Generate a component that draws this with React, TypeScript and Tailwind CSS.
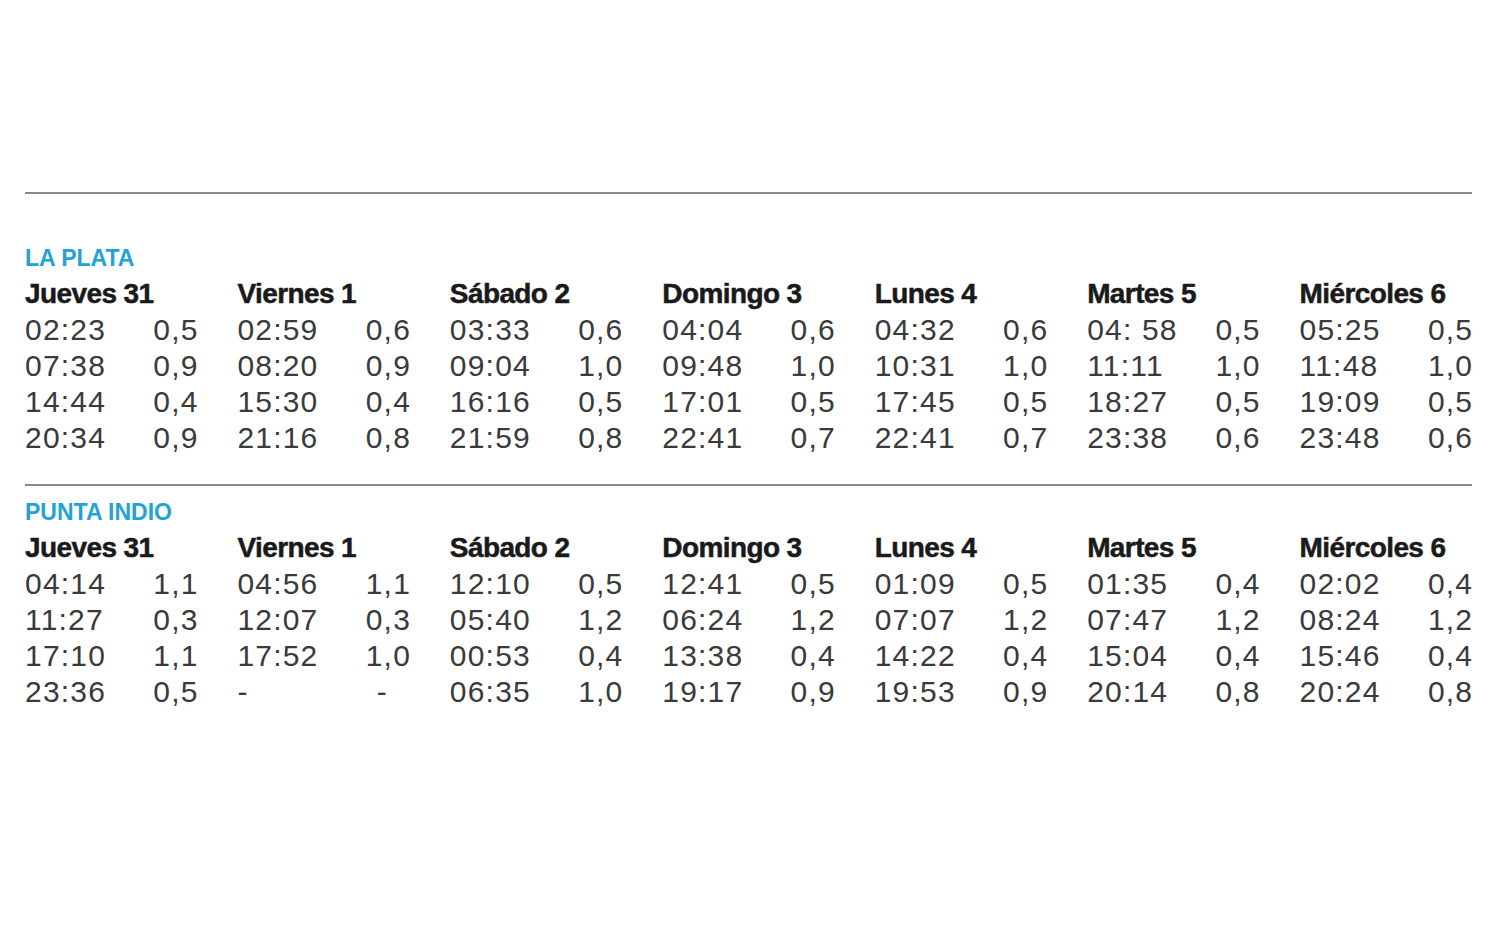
const days = ['Jueves 31', 'Viernes 1', 'Sábado 2', 'Domingo 3', 'Lunes 4', 'Martes 5', 'Miércoles 6'];

type Entry = [string, string];

const laPlata: Entry[][] = [
    [['02:23', '0,5'], ['07:38', '0,9'], ['14:44', '0,4'], ['20:34', '0,9']],
    [['02:59', '0,6'], ['08:20', '0,9'], ['15:30', '0,4'], ['21:16', '0,8']],
    [['03:33', '0,6'], ['09:04', '1,0'], ['16:16', '0,5'], ['21:59', '0,8']],
    [['04:04', '0,6'], ['09:48', '1,0'], ['17:01', '0,5'], ['22:41', '0,7']],
    [['04:32', '0,6'], ['10:31', '1,0'], ['17:45', '0,5'], ['22:41', '0,7']],
    [['04: 58', '0,5'], ['11:11', '1,0'], ['18:27', '0,5'], ['23:38', '0,6']],
    [['05:25', '0,5'], ['11:48', '1,0'], ['19:09', '0,5'], ['23:48', '0,6']],
];

const puntaIndio: Entry[][] = [
    [['04:14', '1,1'], ['11:27', '0,3'], ['17:10', '1,1'], ['23:36', '0,5']],
    [['04:56', '1,1'], ['12:07', '0,3'], ['17:52', '1,0'], ['-', '-']],
    [['12:10', '0,5'], ['05:40', '1,2'], ['00:53', '0,4'], ['06:35', '1,0']],
    [['12:41', '0,5'], ['06:24', '1,2'], ['13:38', '0,4'], ['19:17', '0,9']],
    [['01:09', '0,5'], ['07:07', '1,2'], ['14:22', '0,4'], ['19:53', '0,9']],
    [['01:35', '0,4'], ['07:47', '1,2'], ['15:04', '0,4'], ['20:14', '0,8']],
    [['02:02', '0,4'], ['08:24', '1,2'], ['15:46', '0,4'], ['20:24', '0,8']],
];

const Section = ({ title, data, className }: { title: string; data: Entry[][]; className?: string }) => (
    <div className={className}>
        <div className="h-[36px] leading-[36px] text-[23px] font-bold text-[#22a3d5]">{title}</div>
        <div className="grid grid-cols-7 gap-x-[40px]">
            {days.map((day, i) => (
                <div key={day} className="flex flex-col">
                    <div className="h-[36px] leading-[36px] text-[28px] font-bold text-[#1a1a1a] tracking-[-0.6px] whitespace-nowrap [-webkit-text-stroke:0.5px_#1a1a1a]">
                        {day}
                    </div>
                    {data[i].map(([time, value], j) => (
                        <div
                            key={j}
                            className="flex justify-between h-[36px] leading-[36px] text-[30px] text-[#3a3a3a] tracking-[1.2px]"
                        >
                            <span className="whitespace-pre">{time}</span>
                            <span className={value === '-' ? 'pr-[22px]' : '-mr-[1.2px]'}>{value}</span>
                        </div>
                    ))}
                </div>
            ))}
        </div>
    </div>
);

export default function App() {
    return (
        <div className="w-[1500px] h-[937px] bg-white pt-[192px] font-['Liberation_Sans',Arial,sans-serif]">
            <div className="ml-[25px] w-[1447px]">
                <div className="h-[2px] bg-[#8a8a8a]" />
                <Section title="LA PLATA" data={laPlata} className="mt-[46px]" />
                <div className="h-[2px] bg-[#8a8a8a] mt-[28px]" />
                <Section title="PUNTA INDIO" data={puntaIndio} className="mt-[8px]" />
            </div>
        </div>
    );
}
